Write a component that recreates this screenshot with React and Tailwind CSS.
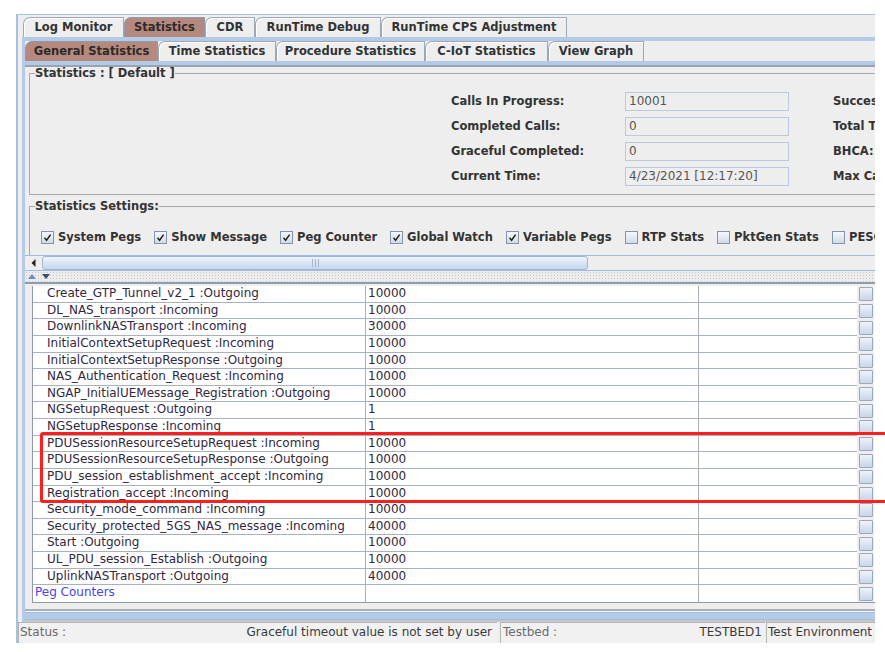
import React from "react";

const rows = [
  ["Create_GTP_Tunnel_v2_1 :Outgoing", "10000"],
  ["DL_NAS_transport :Incoming", "10000"],
  ["DownlinkNASTransport :Incoming", "30000"],
  ["InitialContextSetupRequest :Incoming", "10000"],
  ["InitialContextSetupResponse :Outgoing", "10000"],
  ["NAS_Authentication_Request :Incoming", "10000"],
  ["NGAP_InitialUEMessage_Registration :Outgoing", "10000"],
  ["NGSetupRequest :Outgoing", "1"],
  ["NGSetupResponse :Incoming", "1"],
  ["PDUSessionResourceSetupRequest :Incoming", "10000"],
  ["PDUSessionResourceSetupResponse :Outgoing", "10000"],
  ["PDU_session_establishment_accept :Incoming", "10000"],
  ["Registration_accept :Incoming", "10000"],
  ["Security_mode_command :Incoming", "10000"],
  ["Security_protected_5GS_NAS_message :Incoming", "40000"],
  ["Start :Outgoing", "10000"],
  ["UL_PDU_session_Establish :Outgoing", "10000"],
  ["UplinkNASTransport :Outgoing", "40000"],
];

const tabSel =
  "h-[20px] flex items-center justify-center border border-b-0 border-[#8e9bae] rounded-tl-[7px] bg-[#b5897d] font-bold text-[11.5px] text-[#2e2a2a] shrink-0";
const tabUn =
  "h-[20px] flex items-center justify-center border border-b-0 border-[#9ca8b8] rounded-tl-[7px] bg-[#eeeeee] shadow-[inset_1px_1px_0_#ffffff] font-bold text-[11.5px] text-[#333333] shrink-0";

function Check({ checked }) {
  return (
    <span className="w-[13px] h-[13px] border border-[#8393aa] bg-linear-to-b from-[#f6f8fb] to-[#cfdbea] flex items-center justify-center shrink-0">
      {checked && (
        <svg width="9" height="9" viewBox="0 0 9 9">
          <path d="M1.5 4.8 L3.6 7.2 L7.6 1.6" stroke="#1f1f1f" strokeWidth="1.5" fill="none" />
        </svg>
      )}
    </span>
  );
}

function Opt({ label, checked }) {
  return (
    <div className="flex items-center gap-[4px] shrink-0">
      <Check checked={checked} />
      <span className="font-bold text-[11.5px] text-[#333333]">{label}</span>
    </div>
  );
}

function StatRow({ label, value, right }) {
  return (
    <div className="flex items-center h-[19px]">
      <div className="w-[174px] font-bold text-[11.5px] text-[#333333]">{label}</div>
      <div className="w-[164px] h-[19px] border border-[#b9cae0] bg-[#eeeeee] text-[12px] text-[#555555] pl-[3px] leading-[17px]">
        {value}
      </div>
      <div className="ml-[44px] font-bold text-[11.5px] text-[#333333] whitespace-nowrap">{right}</div>
    </div>
  );
}

function RowBtn() {
  return (
    <div className="w-[14px] h-[14px] border border-[#9aa8bb] rounded-[1px] bg-linear-to-b from-[#eef3f9] to-[#c8d6e8]" />
  );
}

export default function App() {
  return (
    <div className="w-[885px] h-[652px] bg-white overflow-hidden relative font-['DejaVu_Sans',sans-serif]">
      <div className="ml-[16px] mt-[14px] w-[859px] h-[629px] bg-[#eeeeee] border-t border-l-2 border-[#a9c0df] flex flex-col overflow-hidden">
        {/* top tabs */}
        <div className="h-[22px] flex items-end pl-[5px] shrink-0">
          <div className={tabUn + " w-[101px]"}>Log Monitor</div>
          <div className={tabSel + " w-[81px]"}>Statistics</div>
          <div className={tabUn + " w-[50px]"}>CDR</div>
          <div className={tabUn + " w-[126px]"}>RunTime Debug</div>
          <div className={tabUn + " w-[186px]"}>RunTime CPS Adjustment</div>
        </div>

        {/* main tab panel */}
        <div className="ml-[4px] flex-1 flex flex-col border-l-[3px] border-t-[4px] border-[#b4cbe8] min-h-0">
          {/* sub tabs */}
          <div className="h-[20px] flex items-end shrink-0">
            <div className={tabSel + " w-[133px]"}>General Statistics</div>
            <div className={tabUn + " w-[118px]"}>Time Statistics</div>
            <div className={tabUn + " w-[149px]"}>Procedure Statistics</div>
            <div className={tabUn + " w-[123px]"}>C-IoT Statistics</div>
            <div className={tabUn + " w-[96px]"}>View Graph</div>
          </div>
          <div className="h-[4px] bg-[#b4cbe8] shrink-0" />
          <div className="h-[2px] bg-[#98a4b3] shrink-0" />

          {/* top pane */}
          <div className="h-[188px] overflow-hidden shrink-0">
            <div className="w-[1300px] pl-[4px]">
              <fieldset className="h-[128px] border border-[#a9a9a9] w-[1200px]">
                <legend className="ml-[5px] font-bold text-[11.5px] text-[#333333] leading-[12px]">
                  Statistics : [ Default ]
                </legend>
                <div className="pl-[421px] pt-[13px] flex flex-col gap-[6px]">
                  <StatRow label="Calls In Progress:" value="10001" right="Successful Calls:" />
                  <StatRow label="Completed Calls:" value="0" right="Total Time:" />
                  <StatRow label="Graceful Completed:" value="0" right="BHCA:" />
                  <StatRow label="Current Time:" value="4/23/2021 [12:17:20]" right="Max Calls:" />
                </div>
              </fieldset>
              <fieldset className="mt-[5px] h-[80px] border border-[#a9a9a9] w-[1200px]">
                <legend className="ml-[5px] font-bold text-[11.5px] text-[#333333] leading-[12px]">
                  Statistics Settings:
                </legend>
                <div className="pl-[11px] pt-[17px] flex items-center gap-[13px]">
                  <Opt label="System Pegs" checked />
                  <Opt label="Show Message" checked />
                  <Opt label="Peg Counter" checked />
                  <Opt label="Global Watch" checked />
                  <Opt label="Variable Pegs" checked />
                  <Opt label="RTP Stats" />
                  <Opt label="PktGen Stats" />
                  <Opt label="PESC Stats" />
                </div>
              </fieldset>
            </div>
          </div>

          {/* horizontal scrollbar */}
          <div className="h-[16px] flex border-t border-b border-[#a3bbdc] shrink-0 bg-[#eeeeee]">
            <div className="w-[16px] flex items-center justify-center">
              <svg width="5" height="8" viewBox="0 0 5 8">
                <path d="M4.5 0 L0.5 4 L4.5 8 Z" fill="#222" />
              </svg>
            </div>
            <div className="w-[546px] ml-[1px] rounded-[3px] border border-[#9fb6d6] bg-linear-to-b from-[#eef4fb] to-[#c4d7ee] flex items-center justify-center">
              <svg width="7" height="8" viewBox="0 0 7 8">
                <path d="M0.5 0 V8 M3.5 0 V8 M6.5 0 V8" stroke="#a4b5cc" strokeWidth="1" />
              </svg>
            </div>
          </div>

          {/* splitter */}
          <div className="h-[11px] shrink-0 bg-[#ececec] bg-[radial-gradient(#c9c9c9_0.8px,transparent_0.9px)] bg-[length:3px_3px] flex items-center pl-[3px] gap-[6px]">
            <svg width="8" height="5" viewBox="0 0 8 5">
              <path d="M0 5 L4 0 L8 5 Z" fill="#6f8fbf" />
            </svg>
            <svg width="8" height="5" viewBox="0 0 8 5">
              <path d="M0 0 L4 5 L8 0 Z" fill="#3b4f6e" />
            </svg>
          </div>

          {/* bottom pane */}
          <div className="h-[327px] shrink-0 border-t-2 border-[#8f9cad] pt-[2px] pl-[7px] flex flex-col">
            <div className="border-l border-[#8d9aab] border-b border-b-[#8d9aab] bg-white">
              {rows.map(([name, val], i) => (
                <div key={i} className="grid grid-cols-[333px_333px_158px_17px] h-[16.63px] text-[12px] text-[#30283f] leading-[15px]">
                  <div className="pl-[14px] border-r border-b border-[#a9b1bc] whitespace-nowrap overflow-hidden">{name}</div>
                  <div className="pl-[2px] border-r border-b border-[#a9b1bc]">{val}</div>
                  <div className="border-b border-[#a9b1bc]" />
                  <div className="bg-[#eeeeee] flex items-center pl-[2px]">
                    <RowBtn />
                  </div>
                </div>
              ))}
              <div className="grid grid-cols-[333px_333px_158px_17px] h-[16.63px] text-[12px] leading-[15px]">
                <div className="pl-[2px] border-r border-[#a9b1bc] text-[#4b3ff2]">Peg Counters</div>
                <div className="border-r border-[#a9b1bc]" />
                <div />
                <div className="bg-[#eeeeee] flex items-center pl-[2px]">
                  <RowBtn />
                </div>
              </div>
            </div>
          </div>
          <div className="h-[2px] bg-[#a7b1bd] shrink-0" />
          <div className="h-[1px] bg-[#f4f4f4] shrink-0" />
          <div className="h-[8px] bg-[#b4cbe8] border-t border-b border-[#a3bddf] shrink-0" />
          <div className="h-[2px] bg-[#c7c7c7] shrink-0" />
        </div>

        {/* status bar */}
        <div className="h-[21px] flex shrink-0 text-[12px] leading-[19px]">
          <div className="w-[479px] flex justify-between border-t border-l border-[#b5b5b5] bg-[#f1f1f1] pl-[1px] pr-[5px]">
            <span className="text-[#6a6a6a]">Status :</span>
            <span className="text-[#3a3a3a]">Graceful timeout value is not set by user</span>
          </div>
          <div className="ml-[3px] w-[265px] flex justify-between border-t border-l border-[#b5b5b5] bg-[#f1f1f1] pl-[2px] pr-[3px]">
            <span className="text-[#6a6a6a]">Testbed :</span>
            <span className="text-[#3a3a3a]">TESTBED1</span>
          </div>
          <div className="ml-[1px] flex-1 border-t border-l border-[#b5b5b5] bg-[#f1f1f1] pl-[1px] whitespace-nowrap text-[#3a3a3a]">
            Test Environment
          </div>
        </div>
      </div>

      {/* red annotation */}
      <div className="absolute left-[40px] top-[432px] w-[860px] h-[71px] border-[3px] border-[#ff1e1e] rounded-[3px]" />
    </div>
  );
}
